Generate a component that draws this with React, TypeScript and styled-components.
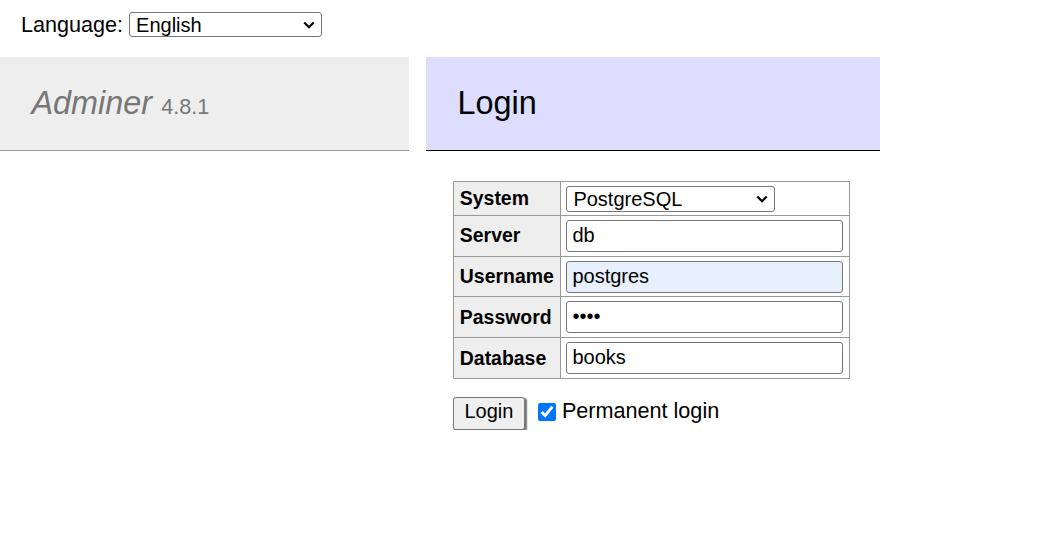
import * as React from 'react';
import styled, { createGlobalStyle } from 'styled-components';

const GlobalStyle = createGlobalStyle`
  body {
    margin: 0;
    background: #fff;
    color: #000;
    font-family: "Liberation Sans", Arial, Helvetica, sans-serif;
    font-size: 21.6px;
  }
`;

const Page = styled.div`
  display: flex;
  flex-direction: column;
`;

const LangBar = styled.div`
  display: flex;
  align-items: center;
  gap: 6px;
  height: 49px;
  padding: 0 21px;
  margin-bottom: 8px;
`;

const SelectWrap = styled.span`
  position: relative;
  display: inline-block;
  vertical-align: top;
  line-height: 0;
`;

const Select = styled.select<{ $width: number; $height: number }>`
  appearance: none;
  box-sizing: border-box;
  width: ${p => p.$width}px;
  height: ${p => p.$height}px;
  font-family: "Liberation Sans", Arial, sans-serif;
  font-size: 20px;
  color: #000;
  background: #fff;
  border: 1px solid #767676;
  border-radius: 3px;
  padding: 0 24px 0 6px;
  outline: none;
`;

const Chevron = styled.svg`
  position: absolute;
  right: 7px;
  top: 50%;
  width: 12px;
  height: 8px;
  margin-top: -4px;
  pointer-events: none;
`;

const Main = styled.div`
  display: flex;
  gap: 17px;
`;

const Menu = styled.div`
  width: 409px;
`;

const Content = styled.div`
  width: 454px;
`;

const Heading = styled.div<{ $variant: 'brand' | 'page' }>`
  box-sizing: border-box;
  height: 94px;
  margin: 0;
  padding: 25.9px 31.5px;
  font-size: 32.4px;
  line-height: 40.5px;
  font-weight: normal;
  white-space: nowrap;
  color: ${p => (p.$variant === 'brand' ? '#777' : '#000')};
  background: ${p => (p.$variant === 'brand' ? '#eee' : '#ddf')};
  border-bottom: 1px solid ${p => (p.$variant === 'brand' ? '#999' : '#000')};
`;

const Brand = styled.span`
  font-style: italic;
`;

const Version = styled.span`
  font-size: 21.7px;
  line-height: 1;
`;

const LoginTable = styled.table`
  border-collapse: collapse;
  font-size: 19.44px;
  margin: 30px 0 0 27px;
`;

const Label = styled.th`
  border: 1px solid #999;
  padding: 3.9px 5.8px;
  background: #eee;
  text-align: left;
  font-weight: bold;
  white-space: nowrap;
`;

const Field = styled.td<{ $tight?: boolean }>`
  border: 1px solid #999;
  padding: ${p => (p.$tight ? '3.5px 5.8px 3.4px' : '3.9px 5.8px')};
  line-height: 0;
`;

const TextInput = styled.input<{ $autofill?: boolean }>`
  display: block;
  box-sizing: border-box;
  width: 277px;
  height: 32px;
  padding: 0 4px 1px 5px;
  font-family: "Liberation Sans", Arial, sans-serif;
  font-size: 20px;
  line-height: normal;
  color: #000;
  background: ${p => (p.$autofill ? '#e8f0fe' : '#fff')};
  border: 1px solid #767676;
  border-radius: 3px;
  outline: none;
`;

const Actions = styled.div`
  display: flex;
  align-items: baseline;
  margin: 18px 0 0 27px;
`;

const SubmitButton = styled.button`
  box-sizing: border-box;
  height: 32.5px;
  padding: 0 10.5px 4px;
  margin-right: 13px;
  font-family: "Liberation Sans", Arial, sans-serif;
  font-size: 20px;
  color: #000;
  background: #efefef;
  border: 1px solid #767676;
  border-radius: 3px;
  box-shadow: 1.5px 1.5px 1.5px #777;
`;

const CheckLabel = styled.label`
  display: flex;
  align-items: baseline;
  font-size: 21.6px;
`;

const Checkbox = styled.input`
  align-self: flex-start;
  width: 18px;
  height: 18px;
  margin: 5px 6px 0 0;
  accent-color: #0075ff;
`;

const Dropdown: React.FunctionComponent<{ width: number; height: number; value: string; label: string }> = ({ width, height, value, label }) => (
    <SelectWrap>
        <Select $width={width} $height={height} defaultValue={value}>
            <option value={value}>{label}</option>
        </Select>
        <Chevron viewBox="0 0 12 8">
            <path d="M1.3 1.5 L6 6.2 L10.7 1.5" fill="none" stroke="#000" strokeWidth="2.2" />
        </Chevron>
    </SelectWrap>
);

const App: React.FunctionComponent = () => (
    <Page>
        <GlobalStyle />
        <LangBar>
            <span>Language:</span>
            <Dropdown width={193} height={25} value="en" label="English" />
        </LangBar>
        <Main>
            <Menu>
                <Heading as="h1" $variant="brand">
                    <Brand>Adminer</Brand> <Version>4.8.1</Version>
                </Heading>
            </Menu>
            <Content>
                <Heading as="h2" $variant="page">Login</Heading>
                <LoginTable>
                    <tbody>
                        <tr>
                            <Label>System</Label>
                            <Field $tight>
                                <Dropdown width={209} height={26} value="pgsql" label="PostgreSQL" />
                            </Field>
                        </tr>
                        <tr>
                            <Label>Server</Label>
                            <Field><TextInput defaultValue="db" /></Field>
                        </tr>
                        <tr>
                            <Label>Username</Label>
                            <Field><TextInput $autofill defaultValue="postgres" /></Field>
                        </tr>
                        <tr>
                            <Label>Password</Label>
                            <Field><TextInput type="password" defaultValue="abcd" /></Field>
                        </tr>
                        <tr>
                            <Label>Database</Label>
                            <Field><TextInput defaultValue="books" /></Field>
                        </tr>
                    </tbody>
                </LoginTable>
                <Actions>
                    <SubmitButton type="button">Login</SubmitButton>
                    <CheckLabel>
                        <Checkbox type="checkbox" defaultChecked />
                        Permanent login
                    </CheckLabel>
                </Actions>
            </Content>
        </Main>
    </Page>
);

export default App;
